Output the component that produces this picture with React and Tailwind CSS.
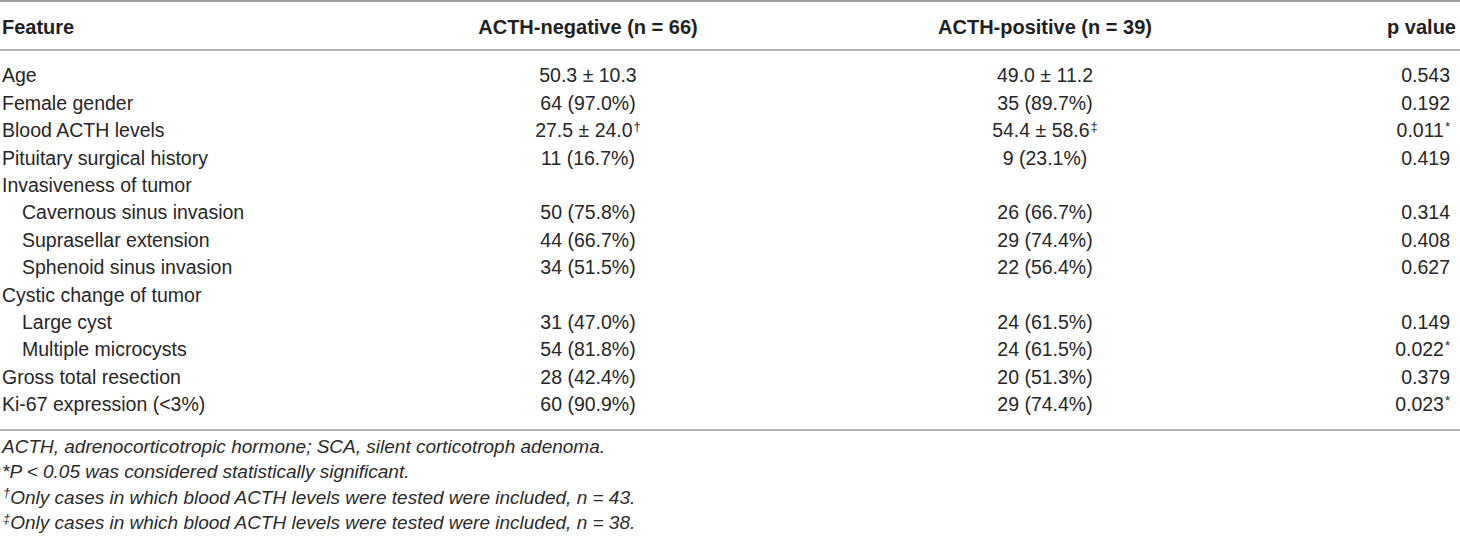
import React from 'react'

const ROWS = [
  { label: 'Age', neg: '50.3 ± 10.3', pos: '49.0 ± 11.2', p: '0.543' },
  { label: 'Female gender', neg: '64 (97.0%)', pos: '35 (89.7%)', p: '0.192' },
  { label: 'Blood ACTH levels', neg: '27.5 ± 24.0', negSup: '†', pos: '54.4 ± 58.6', posSup: '‡', p: '0.011', pSup: '*' },
  { label: 'Pituitary surgical history', neg: '11 (16.7%)', pos: '9 (23.1%)', p: '0.419' },
  { label: 'Invasiveness of tumor' },
  { label: 'Cavernous sinus invasion', sub: true, neg: '50 (75.8%)', pos: '26 (66.7%)', p: '0.314' },
  { label: 'Suprasellar extension', sub: true, neg: '44 (66.7%)', pos: '29 (74.4%)', p: '0.408' },
  { label: 'Sphenoid sinus invasion', sub: true, neg: '34 (51.5%)', pos: '22 (56.4%)', p: '0.627' },
  { label: 'Cystic change of tumor' },
  { label: 'Large cyst', sub: true, neg: '31 (47.0%)', pos: '24 (61.5%)', p: '0.149' },
  { label: 'Multiple microcysts', sub: true, neg: '54 (81.8%)', pos: '24 (61.5%)', p: '0.022', pSup: '*' },
  { label: 'Gross total resection', neg: '28 (42.4%)', pos: '20 (51.3%)', p: '0.379' },
  { label: 'Ki-67 expression (<3%)', neg: '60 (90.9%)', pos: '29 (74.4%)', p: '0.023', pSup: '*' },
]

function Sup({ children }) {
  if (!children) return null
  return <sup className="text-[13px] ml-[1px]">{children}</sup>
}

const GRID = 'grid grid-cols-[420px_336px_578px_1fr]'

export default function App() {
  return (
    <div className="w-[1460px] h-[538px] bg-white text-[#262626] overflow-hidden" style={{ fontFamily: '"Liberation Sans", Arial, sans-serif' }}>
      <div className="border-t-2 border-[#9a9a9a]">
        <div className={`${GRID} pt-[12px] pb-[8px] text-[20px] leading-[27.4px] font-bold text-[#1f1f1f] border-b-2 border-[#b4b4b4]`}>
          <div className="pl-[2px]">Feature</div>
          <div className="text-center">ACTH-negative (n = 66)</div>
          <div className="text-center">ACTH-positive (n = 39)</div>
          <div className="text-right pr-[4px]">p value</div>
        </div>

        <div className="pt-[11px] pb-[10px] text-[19.5px] leading-[27.4px] border-b-2 border-[#b4b4b4]">
          {ROWS.map((r) => (
            <div key={r.label} className={GRID}>
              <div className={r.sub ? 'pl-[22px]' : 'pl-[2px]'}>{r.label}</div>
              <div className="text-center">
                {r.neg}
                <Sup>{r.negSup}</Sup>
              </div>
              <div className="text-center">
                {r.pos}
                <Sup>{r.posSup}</Sup>
              </div>
              <div className="text-right pr-[10px]">
                {r.p}
                <Sup>{r.pSup}</Sup>
              </div>
            </div>
          ))}
        </div>
      </div>

      <div className="pt-[3px] pl-[2px] text-[19px] leading-[25.5px] italic text-[#2a2a2a]">
        <p>ACTH, adrenocorticotropic hormone; SCA, silent corticotroph adenoma.</p>
        <p>*P &lt; 0.05 was considered statistically significant.</p>
        <p>
          <Sup>†</Sup>Only cases in which blood ACTH levels were tested were included, n = 43.
        </p>
        <p>
          <Sup>‡</Sup>Only cases in which blood ACTH levels were tested were included, n = 38.
        </p>
      </div>
    </div>
  )
}
